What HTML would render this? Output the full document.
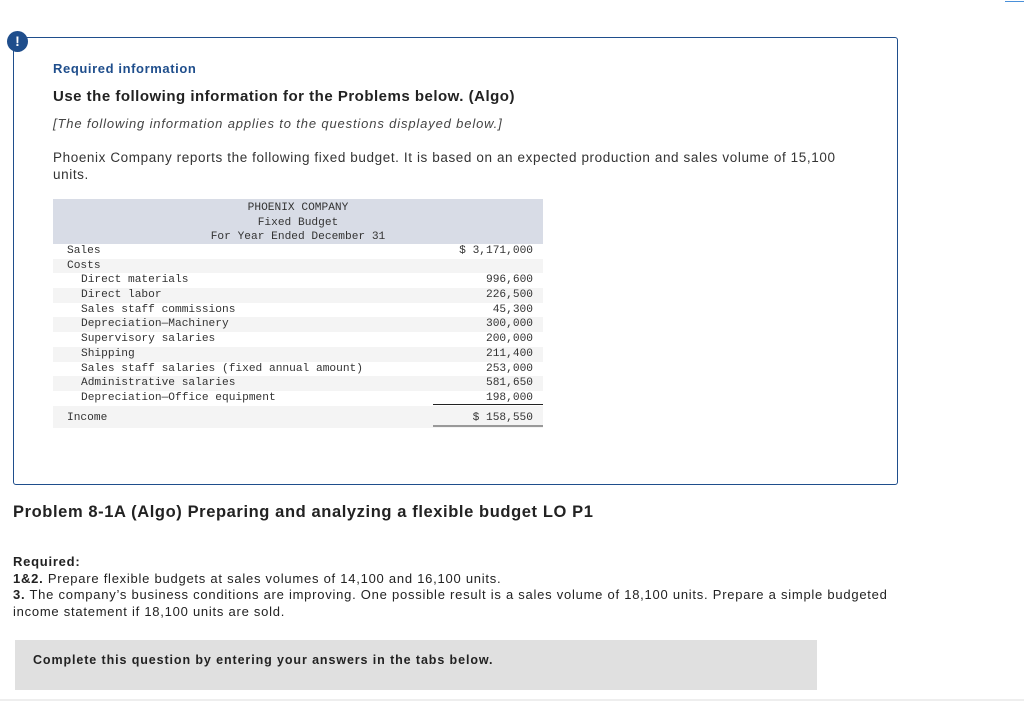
<!DOCTYPE html>
<html><head><meta charset="utf-8"><style>
body{margin:0;width:1024px;height:702px;background:#fff;position:relative;font-family:"Liberation Sans",sans-serif;color:#222;overflow:hidden}
.a{position:absolute;white-space:nowrap}
.box{position:absolute;left:13px;top:37px;width:883px;height:446px;border:1px solid #1f4e8c;border-radius:3px}
.ic{position:absolute;left:7px;top:31px;width:21px;height:21px;border-radius:50%;background:#1f4e8c;color:#fff;font-weight:bold;font-size:14px;text-align:center;line-height:21px}
.t{position:absolute;left:53px;top:199px;width:490px;font-family:"Liberation Mono",monospace;font-size:11.2px;color:#333}
.hd{background:#d8dce6;height:44px;text-align:center;line-height:14.6px;padding-top:1px;box-sizing:border-box}
.r{height:14.7px;line-height:14.7px;position:relative}
.r.s{background:#f4f4f4}
.r span{position:absolute;right:10px;top:0}
.l1{padding-left:14px}.l2{padding-left:28px}
</style></head><body>
<div style="position:absolute;left:1005px;top:1px;width:19px;height:1px;background:#4a90d9"></div>
<div class="box"></div>
<div class="ic">!</div>
<div class="a" style="left:53px;top:61px;font-size:13px;font-weight:bold;color:#1f4e8c;letter-spacing:0.6px">Required information</div>
<div class="a" style="left:53px;top:88px;font-size:15px;font-weight:bold;color:#222;letter-spacing:0.5px">Use the following information for the Problems below. (Algo)</div>
<div class="a" style="left:53px;top:116px;font-size:13px;font-style:italic;color:#444;letter-spacing:0.85px">[The following information applies to the questions displayed below.]</div>
<div class="a" style="left:53px;top:149px;font-size:13.5px;color:#333;line-height:17px;letter-spacing:0.6px">Phoenix Company reports the following fixed budget. It is based on an expected production and sales volume of 15,100<br>units.</div>
<div class="t">
<div class="hd" style="height:45px;padding-top:2px">PHOENIX COMPANY<br>Fixed Budget<br>For Year Ended December 31</div>
<div class="r l1" style="margin-top:0">Sales<span>$ 3,171,000</span></div>
<div class="r l1 s">Costs</div>
<div class="r l2">Direct materials<span>996,600</span></div>
<div class="r l2 s">Direct labor<span>226,500</span></div>
<div class="r l2">Sales staff commissions<span>45,300</span></div>
<div class="r l2 s">Depreciation—Machinery<span>300,000</span></div>
<div class="r l2">Supervisory salaries<span>200,000</span></div>
<div class="r l2 s">Shipping<span>211,400</span></div>
<div class="r l2">Sales staff salaries (fixed annual amount)<span>253,000</span></div>
<div class="r l2 s">Administrative salaries<span>581,650</span></div>
<div class="r l2">Depreciation—Office equipment<span>198,000</span></div>
<div class="r l1 s" style="height:22px;line-height:24px">Income<span>$ 158,550</span></div>
<div style="position:absolute;left:380px;top:205px;width:110px;height:1px;background:#222"></div>
<div style="position:absolute;left:380px;top:226px;width:110px;height:2px;background:#999"></div>
</div>
<div class="a" style="left:13px;top:503px;font-size:16.5px;font-weight:bold;color:#222;letter-spacing:0.6px">Problem 8-1A (Algo) Preparing and analyzing a flexible budget LO P1</div>
<div class="a" style="left:13px;top:554px;font-size:13px;line-height:16.5px;color:#222;letter-spacing:0.75px"><b>Required:</b><br><b>1&amp;2.</b> Prepare flexible budgets at sales volumes of 14,100 and 16,100 units.<br><b>3.</b> The company’s business conditions are improving. One possible result is a sales volume of 18,100 units. Prepare a simple budgeted<br>income statement if 18,100 units are sold.</div>
<div style="position:absolute;left:15px;top:640px;width:802px;height:50px;background:#e0e0e0"></div>
<div class="a" style="left:33px;top:653px;font-size:12.5px;font-weight:bold;color:#222;letter-spacing:0.9px">Complete this question by entering your answers in the tabs below.</div>
<div style="position:absolute;left:0;top:699px;width:1024px;height:2px;background:#eee"></div>
</body></html>
